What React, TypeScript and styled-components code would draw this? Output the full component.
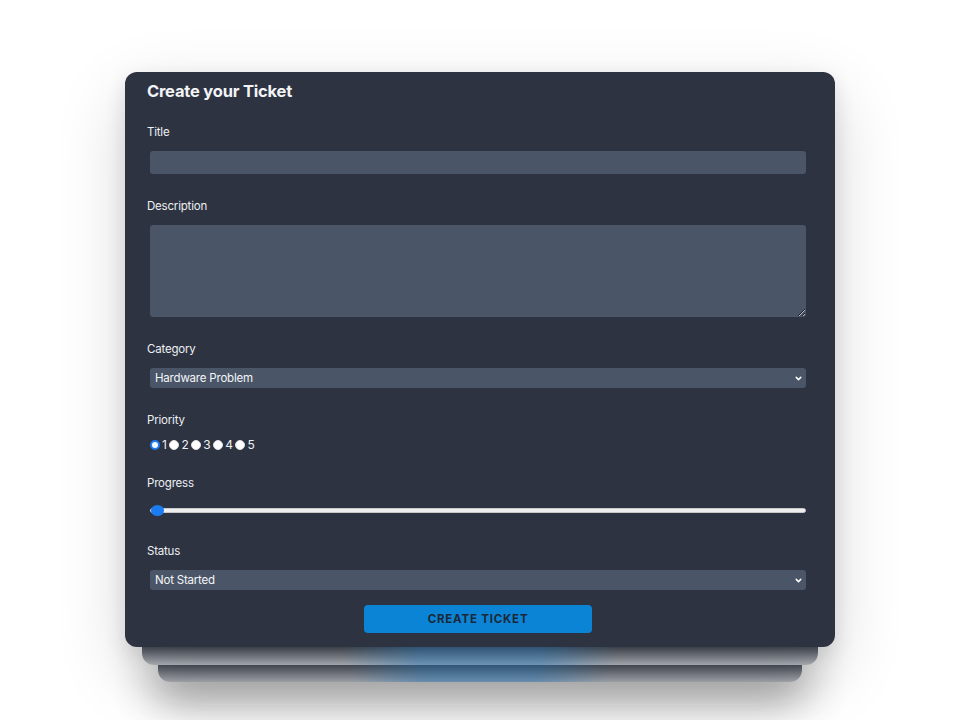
import React, { useState } from "react";
import styled, { createGlobalStyle } from "styled-components";
import { ChevronDown } from "lucide-react";

const Global = createGlobalStyle`
  html, body { margin: 0; padding: 0; background: #ffffff; }
  body { font-family: Inter, "Noto Sans", "Liberation Sans", sans-serif; }
  * { box-sizing: border-box; }
`;

const Page = styled.div`
  width: 960px;
  height: 720px;
  overflow: hidden;
  display: flex;
  justify-content: center;
  padding-top: 72px;
`;

const Stack = styled.div`
  position: relative;
  width: 710px;
  align-self: flex-start;
`;

const Layer = styled.div<{ $inset: number; $drop: number; $shade: number }>`
  position: absolute;
  left: ${(p) => p.$inset}px;
  right: ${(p) => p.$inset}px;
  bottom: ${(p) => -p.$drop}px;
  height: 44px;
  border-radius: 12px;
  background:
    linear-gradient(90deg, rgba(40, 140, 220, 0) 30%, rgba(40, 140, 220, 0.42) 41%, rgba(40, 140, 220, 0.42) 59%, rgba(40, 140, 220, 0) 70%),
    linear-gradient(180deg, #2d3442 0%, #454b56 56%, #b6bac1 100%);
  box-shadow: 0 22px 44px rgba(0, 0, 0, ${(p) => p.$shade});
  z-index: ${(p) => (p.$inset > 20 ? 0 : 1)};
`;

const Card = styled.div`
  position: relative;
  z-index: 2;
  background: #2d3341;
  border-radius: 12px;
  padding: 7px 26px 14px 22px;
  box-shadow: 0 24px 70px rgba(0, 0, 0, 0.16), 0 8px 20px rgba(0, 0, 0, 0.12);
  color: #f1f3f6;
`;

const Heading = styled.h2`
  margin: 0 0 21px;
  font-size: 16.5px;
  line-height: 24px;
  font-weight: 700;
  color: #f3f4f6;
  letter-spacing: -0.2px;
`;

const Field = styled.div<{ $after?: number }>`
  display: flex;
  flex-direction: column;
  margin-bottom: ${(p) => (p.$after ?? 24)}px;
`;

const Label = styled.label<{ $space?: number }>`
  display: block;
  font-size: 11.5px;
  line-height: 16px;
  letter-spacing: -0.2px;
  color: #eef0f3;
  margin-bottom: ${(p) => (p.$space ?? 11)}px;
`;

const TextInput = styled.input`
  display: block;
  margin: 0 3px;
  height: 23px;
  border: none;
  border-radius: 3px;
  background: #4a5568;
  color: #fff;
  font: inherit;
  font-size: 12px;
  padding: 0 6px;
  outline: none;
`;

const TextArea = styled.textarea`
  display: block;
  margin: 0 3px;
  height: 92px;
  border: none;
  border-radius: 3px;
  background: #4a5568;
  color: #fff;
  font: inherit;
  font-size: 12px;
  padding: 4px 6px;
  outline: none;
  resize: vertical;
`;

const SelectWrap = styled.div`
  position: relative;
  margin: 0 3px;
  height: 20px;
`;

const Select = styled.select`
  display: block;
  appearance: none;
  -webkit-appearance: none;
  width: 100%;
  height: 20px;
  border: none;
  border-radius: 3px;
  background: #4a5568;
  color: #f4f5f7;
  font-family: inherit;
  font-size: 11.5px;
  letter-spacing: -0.2px;
  line-height: 20px;
  padding: 0 20px 0 5px;
  outline: none;
`;

const Chevron = styled.span`
  position: absolute;
  right: 3px;
  top: 6px;
  width: 9px;
  height: 9px;
  display: flex;
  color: #ffffff;
  pointer-events: none;
`;

const RadioRow = styled.div`
  display: flex;
  align-items: center;
  height: 14px;
  margin: -1px 3px 0;
`;

const Radio = styled.input`
  appearance: none;
  -webkit-appearance: none;
  width: 10px;
  height: 10px;
  margin: 0;
  border-radius: 50%;
  background: #ffffff;
  border: 1px solid #e2e2e2;
  &:checked {
    border: 2px solid #1a7cf0;
    background: #f4f8ff;
  }
`;

const RadioText = styled.span`
  font-size: 12px;
  line-height: 14px;
  color: #eef0f3;
  margin: 0 2.5px 0 2px;
`;

const Range = styled.input`
  display: block;
  appearance: none;
  -webkit-appearance: none;
  margin: 0 3px;
  height: 16px;
  background: transparent;
  outline: none;
  &::-webkit-slider-runnable-track {
    height: 5px;
    border-radius: 3px;
    background: #eeeeee;
    border: 1px solid #c9c9c9;
  }
  &::-webkit-slider-thumb {
    -webkit-appearance: none;
    width: 13px;
    height: 11px;
    border-radius: 50%;
    background: #1a7cf0;
    margin-top: -4px;
    border: none;
  }
`;

const ButtonRow = styled.div`
  display: flex;
  justify-content: center;
  margin-top: -9px;
`;

const Button = styled.button`
  width: 228px;
  height: 28px;
  border: none;
  border-radius: 4px;
  background: #0b84d6;
  color: #1c2838;
  font-family: inherit;
  font-size: 11.5px;
  font-weight: 700;
  letter-spacing: 0.8px;
  text-transform: uppercase;
  cursor: pointer;
`;

const priorities = [1, 2, 3, 4, 5];

export default function App() {
  const [priority, setPriority] = useState(1);
  const [progress, setProgress] = useState(0);
  return (
    <>
      <Global />
      <Page>
        <Stack>
          <Layer $inset={33} $drop={35} $shade={0.3} />
          <Layer $inset={17} $drop={18} $shade={0.16} />
          <Card>
            <Heading>Create your Ticket</Heading>
            <form onSubmit={(e) => e.preventDefault()}>
              <Field>
                <Label htmlFor="title">Title</Label>
                <TextInput id="title" type="text" />
              </Field>
              <Field>
                <Label htmlFor="description">Description</Label>
                <TextArea id="description" />
              </Field>
              <Field>
                <Label htmlFor="category">Category</Label>
                <SelectWrap>
                  <Select id="category" defaultValue="hardware">
                    <option value="hardware">Hardware Problem</option>
                    <option value="software">Software Problem</option>
                    <option value="project">Project</option>
                  </Select>
                  <Chevron>
                    <ChevronDown size={9} strokeWidth={4} />
                  </Chevron>
                </SelectWrap>
              </Field>
              <Field $after={23}>
                <Label>Priority</Label>
                <RadioRow>
                  {priorities.map((n) => (
                    <React.Fragment key={n}>
                      <Radio
                        type="radio"
                        name="priority"
                        value={n}
                        checked={priority === n}
                        onChange={() => setPriority(n)}
                      />
                      <RadioText>{n}</RadioText>
                    </React.Fragment>
                  ))}
                </RadioRow>
              </Field>
              <Field $after={25}>
                <Label htmlFor="progress">Progress</Label>
                <Range
                  id="progress"
                  type="range"
                  min={0}
                  max={100}
                  value={progress}
                  onChange={(e) => setProgress(Number(e.target.value))}
                />
              </Field>
              <Field>
                <Label htmlFor="status">Status</Label>
                <SelectWrap>
                  <Select id="status" defaultValue="not-started">
                    <option value="not-started">Not Started</option>
                    <option value="started">Started</option>
                    <option value="done">Done</option>
                  </Select>
                  <Chevron>
                    <ChevronDown size={9} strokeWidth={4} />
                  </Chevron>
                </SelectWrap>
              </Field>
              <ButtonRow>
                <Button type="submit">Create Ticket</Button>
              </ButtonRow>
            </form>
          </Card>
        </Stack>
      </Page>
    </>
  );
}
